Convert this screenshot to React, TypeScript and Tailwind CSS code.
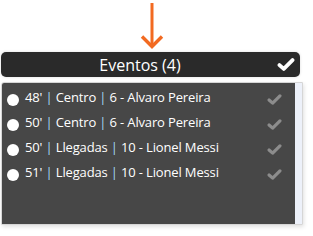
const events = [
  { min: "48'", type: 'Centro', player: '6 - Alvaro Pereira' },
  { min: "50'", type: 'Centro', player: '6 - Alvaro Pereira' },
  { min: "50'", type: 'Llegadas', player: '10 - Lionel Messi' },
  { min: "51'", type: 'Llegadas', player: '10 - Lionel Messi' },
];

function Tick({ className }: { className?: string }) {
  return (
    <svg viewBox="0 0 16 13" className={className} fill="none">
      <path d="M2.2 7 L6 10.4 L13.8 2.6" stroke="currentColor" strokeWidth="3.4" strokeLinecap="round" strokeLinejoin="round" />
    </svg>
  );
}

export default function App() {
  return (
    <div className="w-[313px] h-[236px] bg-white overflow-hidden" style={{ fontFamily: '"Open Sans", sans-serif' }}>
      <div className="pl-[140px] pt-[3px]">
        <svg width="24" height="46" viewBox="0 0 24 46" fill="none">
          <path d="M12 0 V44" stroke="#f26a21" strokeWidth="3" />
          <path d="M2 33.5 L12 43.5 L22 33.5" stroke="#f26a21" strokeWidth="3.4" />
        </svg>
      </div>

      <div className="ml-[1px] mt-[3px] w-[299px] h-[25px] rounded-[5px] bg-[#2a2a2a] flex items-center shadow-[0_0_3px_rgba(0,0,0,0.15)]">
        <div className="flex-1 text-center text-white text-[16px] font-medium leading-none pl-[2px]">Eventos (4)</div>
        <Tick className="w-[18px] h-[15px] text-white mr-[5px]" />
      </div>

      <div className="ml-[1px] mt-[5px] w-[302px] h-[143px] flex border border-[#d6d6d6] rounded-tl-[3px] shadow-[1px_2px_4px_rgba(0,0,0,0.12)]">
        <div className="flex-1 bg-[#474747] pt-[2px] rounded-tl-[2px]">
          {events.map((e, i) => (
            <div key={i} className="h-[25px] flex items-center pl-[5px] pr-[13px] text-white text-[13px] font-medium tracking-[-0.15px]">
              <span className="w-[12px] h-[12px] rounded-full bg-white mt-[5px] mr-[6px] shrink-0" />
              <span className="flex-1 whitespace-nowrap">
                {e.min} <span className="text-[#a6daf7]">|</span> {e.type} <span className="text-[#a6daf7]">|</span> {e.player}
              </span>
              <Tick className="w-[15px] h-[13px] text-[#8c8c8c] mt-[3px]" />
            </div>
          ))}
        </div>
        <div className="w-[7px] bg-[#edf1fa]" />
      </div>
    </div>
  );
}
